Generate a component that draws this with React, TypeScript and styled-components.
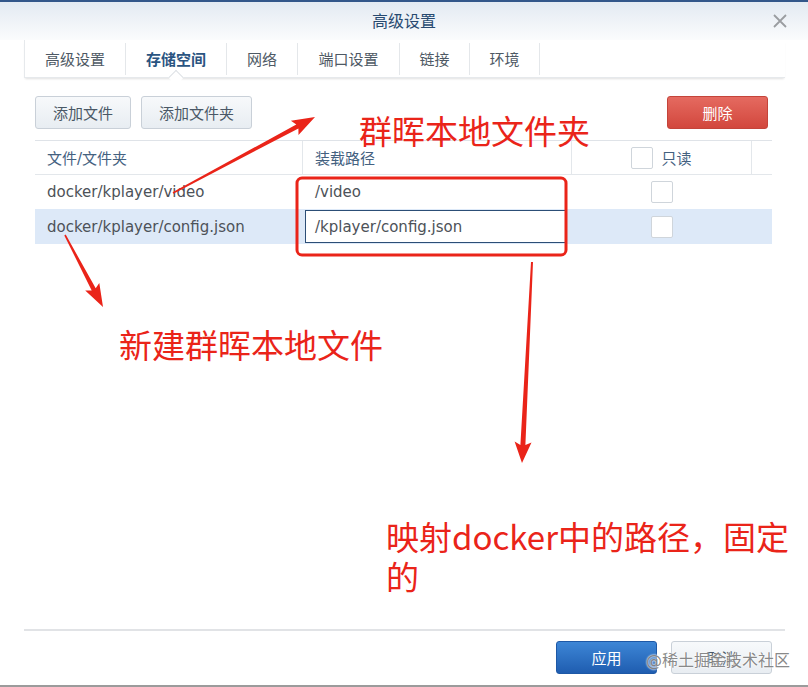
import React from "react";
import styled, { createGlobalStyle } from "styled-components";

const Global = createGlobalStyle`
  html, body { margin: 0; padding: 0; background: #fff; }
  body { font-family: "DejaVu Sans", "Noto Sans CJK SC", sans-serif; }
`;

const CJK = `"DejaVu Sans", "Noto Sans CJK SC", sans-serif`;

const Dialog = styled.div`
  position: relative;
  width: 808px;
  height: 687px;
  box-sizing: border-box;
  border-top: 2px solid #33578a;
  border-bottom: 2px solid #9b9b9b;
  display: flex;
  flex-direction: column;
  background: #fff;
  overflow: hidden;
`;

const TitleBar = styled.div`
  height: 38px;
  flex: none;
  display: flex;
  align-items: center;
  justify-content: center;
  background: linear-gradient(#e3eaf2, #fbfcfd);
  position: relative;
`;

const Title = styled.div`
  font-family: ${CJK};
  font-size: 16px;
  color: #284a70;
  margin-top: -2px;
`;

const Close = styled.div`
  position: absolute;
  right: 21px;
  top: 12px;
  width: 14px;
  height: 14px;
  display: flex;
`;

const TabBar = styled.div`
  margin: 0 23px 0 24px;
  height: 38px;
  flex: none;
  display: flex;
  align-items: stretch;
  position: relative;
  box-shadow: 0 2px 2px -1px rgba(0, 0, 0, 0.12);
  border-bottom: 1px solid #e6e9ec;
  box-sizing: border-box;
  border-left: 1px solid #e6e9ec;
`;

const Tab = styled.div<{ $active?: boolean; $w: number }>`
  width: ${(p) => p.$w}px;
  box-sizing: border-box;
  display: flex;
  align-items: center;
  justify-content: center;
  font-family: ${CJK};
  font-size: 15px;
  font-weight: ${(p) => (p.$active ? 700 : 400)};
  color: ${(p) => (p.$active ? "#2a5481" : "#4e5964")};
  border-right: 1px solid #e4e7ea;
  margin: 3px 0 2px;
  position: relative;
  padding-bottom: 2px;
`;

const Notch = styled.div`
  position: absolute;
  left: 50%;
  bottom: -8px;
  width: 10px;
  height: 10px;
  background: #fff;
  transform: translateX(-50%) rotate(45deg);
  border-left: 1px solid #dde1e5;
  border-top: 1px solid #dde1e5;
`;

const Content = styled.div`
  flex: 1;
  padding: 18px 36px 0 35px;
  display: flex;
  flex-direction: column;
`;

const Toolbar = styled.div`
  display: flex;
  gap: 10px;
  height: 33px;
  margin: 0 4px 11px 0;
`;

const Btn = styled.div<{ $variant?: "gray" | "red" | "blue"; $w: number }>`
  width: ${(p) => p.$w}px;
  height: 33px;
  box-sizing: border-box;
  border-radius: 3px;
  display: flex;
  align-items: center;
  justify-content: center;
  font-family: ${CJK};
  font-size: 15px;
  ${(p) =>
    p.$variant === "red"
      ? `background: linear-gradient(#e56a60, #d2473d); border: 1px solid #c4443a; color: #fff;`
      : p.$variant === "blue"
      ? `background: linear-gradient(#3d86d6, #1f5db0); border: 1px solid #1d58a6; color: #fff;`
      : `background: linear-gradient(#f7f9fb, #e8edf2); border: 1px solid #c9d0d8; color: #4a5866;`}
`;

const Spacer = styled.div`
  flex: 1;
`;

const Table = styled.div`
  width: 737px;
  border-top: 1px solid #dfe3e8;
`;

const Row = styled.div<{ $head?: boolean; $sel?: boolean }>`
  display: grid;
  grid-template-columns: 268px 269px 180px 20px;
  height: ${(p) => (p.$sel ? 35 : 34)}px;
  box-sizing: border-box;
  background: ${(p) => (p.$sel ? "#dde9f8" : "#fff")};
  border-bottom: 1px solid ${(p) => (p.$head ? "#e3e7eb" : "transparent")};
`;

const Cell = styled.div<{ $head?: boolean; $center?: boolean; $sep?: boolean }>`
  display: flex;
  align-items: center;
  justify-content: ${(p) => (p.$center ? "center" : "flex-start")};
  padding-left: ${(p) => (p.$center ? 0 : 12)}px;
  font-family: ${CJK};
  font-size: 15px;
  color: ${(p) => (p.$head ? "#44617f" : "#4d5258")};
  border-right: 1px solid ${(p) => (p.$sep ? "#e3e7eb" : "transparent")};
  gap: 8px;
  white-space: nowrap;
`;

const Input = styled.div`
  margin: 1px 0 1px 2px;
  width: 262px;
  height: 33px;
  box-sizing: border-box;
  border: 1px solid #2c4e76;
  background: #fff;
  display: flex;
  align-items: center;
  padding-left: 9px;
  font-family: ${CJK};
  font-size: 15px;
  color: #4d5258;
`;

const InputCell = styled.div`
  display: flex;
  align-items: center;
`;

const Check = styled.div`
  width: 22px;
  height: 22px;
  box-sizing: border-box;
  border: 1px solid #cfd5db;
  border-radius: 2px;
  background: #fff;
`;

const Footer = styled.div`
  margin: 0 23px 0 24px;
  border-top: 2px solid #e1e3e6;
  padding: 10px 13px 11px 0;
  display: flex;
  justify-content: flex-end;
  gap: 14px;
  position: relative;
`;

const Watermark = styled.div`
  position: absolute;
  right: -5px;
  top: 16px;
  font-family: ${CJK};
  font-size: 16px;
  color: rgba(105, 105, 105, 0.8);
  text-shadow: 0 0 2px #fff, 0 0 2px #fff;
  white-space: nowrap;
`;

const Overlay = styled.svg`
  position: absolute;
  left: 0;
  top: 0;
  pointer-events: none;
`;

const Note = styled.div<{ $x: number; $y: number; $w?: number }>`
  position: absolute;
  left: ${(p) => p.$x}px;
  top: ${(p) => p.$y}px;
  ${(p) => (p.$w ? `width: ${p.$w}px;` : "white-space: nowrap;")}
  font-family: "Noto Sans CJK SC", sans-serif;
  font-size: 33px;
  line-height: 40px;
  color: #ea2419;
`;

function arrow(x1: number, y1: number, x2: number, y2: number, w1: number, w2: number, hl: number, hw: number) {
  const dx = x2 - x1;
  const dy = y2 - y1;
  const len = Math.hypot(dx, dy);
  const ux = dx / len;
  const uy = dy / len;
  const nx = -uy;
  const ny = ux;
  const bx = x2 - ux * hl;
  const by = y2 - uy * hl;
  const pts = [
    [x1 + (nx * w1) / 2, y1 + (ny * w1) / 2],
    [bx + (nx * w2) / 2, by + (ny * w2) / 2],
    [bx + (nx * hw) / 2 - ux * 3, by + (ny * hw) / 2 - uy * 3],
    [x2, y2],
    [bx - (nx * hw) / 2 - ux * 3, by - (ny * hw) / 2 - uy * 3],
    [bx - (nx * w2) / 2, by - (ny * w2) / 2],
    [x1 - (nx * w1) / 2, y1 - (ny * w1) / 2],
  ];
  return pts.map((p) => `${p[0].toFixed(1)},${p[1].toFixed(1)}`).join(" ");
}

const tabs = [
  { t: "高级设置", w: 101 },
  { t: "存储空间", w: 101, a: true },
  { t: "网络", w: 71 },
  { t: "端口设置", w: 102 },
  { t: "链接", w: 70 },
  { t: "环境", w: 70 },
];

export default function App() {
  return (
    <>
      <Global />
      <Dialog>
        <TitleBar>
          <Title>高级设置</Title>
          <Close>
            <svg width="14" height="14" viewBox="0 0 14 14">
              <path d="M1 1L13 13M13 1L1 13" stroke="#9a9da1" strokeWidth="1.8" />
            </svg>
          </Close>
        </TitleBar>
        <TabBar>
          {tabs.map((tb) => (
            <Tab key={tb.t} $w={tb.w} $active={tb.a}>
              {tb.t}
              {tb.a && <Notch />}
            </Tab>
          ))}
        </TabBar>
        <Content>
          <Toolbar>
            <Btn $w={96}>添加文件</Btn>
            <Btn $w={111}>添加文件夹</Btn>
            <Spacer />
            <Btn $w={101} $variant="red">删除</Btn>
          </Toolbar>
          <Table>
            <Row $head>
              <Cell $head $sep>文件/文件夹</Cell>
              <Cell $head $sep>装载路径</Cell>
              <Cell $head $sep $center>
                <Check />
                只读
              </Cell>
              <Cell />
            </Row>
            <Row>
              <Cell>docker/kplayer/video</Cell>
              <Cell>/video</Cell>
              <Cell $center>
                <Check />
              </Cell>
              <Cell />
            </Row>
            <Row $sel>
              <Cell>docker/kplayer/config.json</Cell>
              <InputCell>
                <Input>/kplayer/config.json</Input>
              </InputCell>
              <Cell $center>
                <Check />
              </Cell>
              <Cell />
            </Row>
          </Table>
        </Content>
        <Footer>
          <Btn $w={101} $variant="blue">应用</Btn>
          <Btn $w={101}>取消</Btn>
          <Watermark>@稀土掘金技术社区</Watermark>
        </Footer>

        <Overlay width="808" height="687" viewBox="0 0 808 687">
          <rect x="297" y="176" width="269" height="77" rx="5" fill="none" stroke="#ea2419" strokeWidth="3" />
          <polygon points={arrow(173, 191, 315, 115, 1.5, 4.5, 20, 16)} fill="#ea2419" />
          <polygon points={arrow(65, 233, 103, 305, 1.5, 4.5, 20, 16)} fill="#ea2419" />
          <polygon points={arrow(532, 260, 522, 461, 2, 5, 18, 17)} fill="#ea2419" />
        </Overlay>
        <Note $x={359} $y={108}>群晖本地文件夹</Note>
        <Note $x={119} $y={322}>新建群晖本地文件</Note>
        <Note $x={386} $y={514} $w={420}>映射docker中的路径，固定的</Note>
      </Dialog>
    </>
  );
}
